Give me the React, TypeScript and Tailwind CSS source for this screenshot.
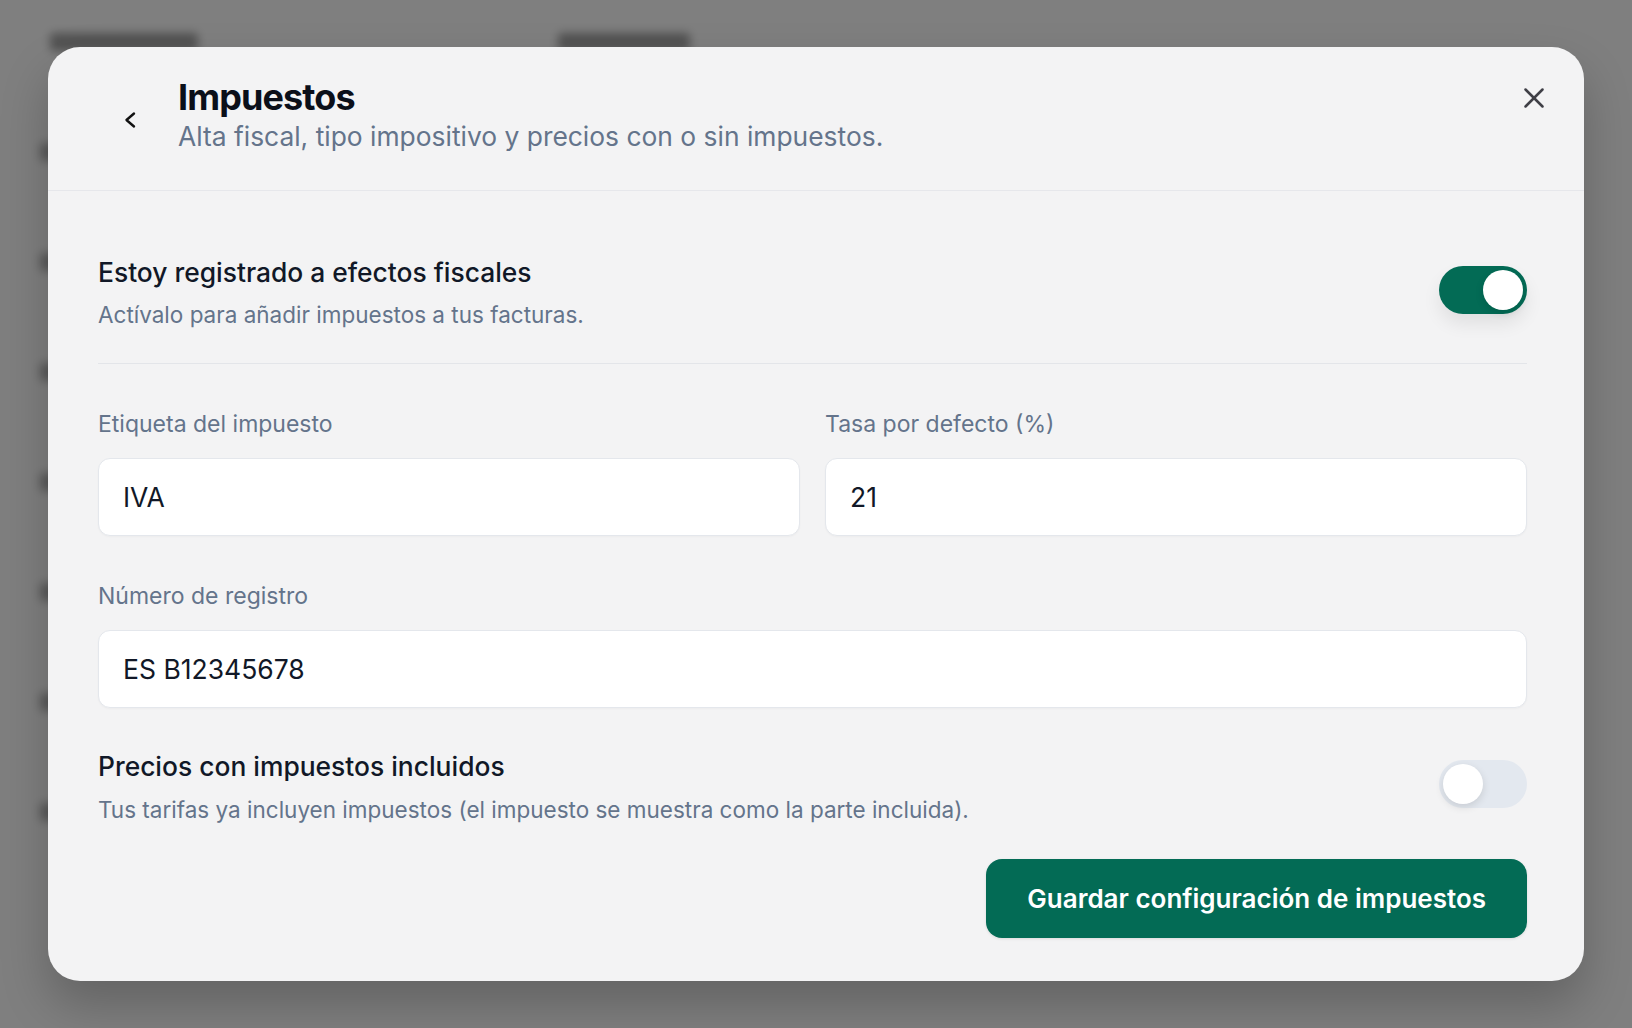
import React from 'react';
import { X } from 'lucide-react';

const Toggle: React.FC<{ on: boolean; onChange: (v: boolean) => void }> = ({ on, onChange }) => (
  <button
    type="button"
    role="switch"
    aria-checked={on}
    onClick={() => onChange(!on)}
    className={`mt-[11px] flex h-[48px] w-[88px] shrink-0 items-center rounded-full p-1 transition-colors ${
      on ? 'justify-end bg-[#036b55] shadow-[0_10px_18px_rgba(0,0,0,0.08)]' : 'justify-start bg-[#e3e8ef]'
    }`}
  >
    <span className="h-[40px] w-[40px] rounded-full bg-white shadow-[0_3px_8px_rgba(0,0,0,0.12)]" />
  </button>
);

const Field: React.FC<{ label: string; value: string; onChange: (v: string) => void }> = ({ label, value, onChange }) => (
  <label className="flex flex-col">
    <span className="mb-[20px] text-[23px] leading-[28px] text-[#64748b]">{label}</span>
    <input
      value={value}
      onChange={e => onChange(e.target.value)}
      className="h-[78px] rounded-[12px] border-[1.5px] border-[#e4e7ec] bg-white px-[24px] text-[26.5px] text-[#111827] shadow-[0_1px_2px_rgba(0,0,0,0.03)] outline-none"
    />
  </label>
);

// blurred page behind the dialog
const Backdrop: React.FC = () => (
  <div className="flex h-full flex-col bg-white blur-[5px]">
    <div className="flex items-center gap-[360px] px-[50px] pt-[33px]">
      <div className="h-[18px] w-[148px] rounded bg-[#a4a4a4]" />
      <div className="h-[18px] w-[132px] rounded bg-[#a4a4a4]" />
    </div>
    <div className="mt-[92px] flex flex-col gap-[92px] pl-[40px]">
      {[0, 1, 2, 3, 4, 5, 6].map(i => (
        <div key={i} className="h-[18px] w-[120px] rounded bg-[#b4b4b4]" />
      ))}
    </div>
  </div>
);

export default function App() {
  const [registered, setRegistered] = React.useState(true);
  const [inclusive, setInclusive] = React.useState(false);
  const [label, setLabel] = React.useState('IVA');
  const [rate, setRate] = React.useState('21');
  const [number, setNumber] = React.useState('ES B12345678');

  return (
    <div className="relative h-[1028px] w-full overflow-hidden font-['Inter',sans-serif]">
      <Backdrop />
      <div className="absolute inset-0 bg-black/50" />

      <div className="absolute inset-0 flex items-center justify-center">
        <div className="w-[1536px] rounded-[32px] bg-[#f3f3f4] shadow-[0_24px_48px_rgba(0,0,0,0.22)]">
          {/* header */}
          <div className="flex items-start border-b-[1.5px] border-[#e6e7eb] pb-[37px] pl-[64px] pr-[33px] pt-[29px]">
            <button type="button" className="mt-[26px] flex h-9 w-9 items-center justify-center text-[#111]">
              <svg width="24" height="24" viewBox="0 0 24 24" fill="none" stroke="currentColor" strokeWidth="2.4" strokeLinecap="round" strokeLinejoin="round">
                <path d="M16 5.5 8.5 12 16 18.5" />
              </svg>
            </button>
            <div className="ml-[30px]">
              <h2 className="text-[36px] font-bold leading-[43px] tracking-tight text-[#0b0f19]">Impuestos</h2>
              <p className="mt-[1px] text-[26.4px] leading-[33px] text-[#64748b]">
                Alta fiscal, tipo impositivo y precios con o sin impuestos.
              </p>
            </div>
            <button type="button" className="ml-auto mt-[5px] flex h-[34px] w-[34px] items-center justify-center text-[#3f3f46]">
              <X size={34} strokeWidth={1.75} />
            </button>
          </div>

          {/* body */}
          <div className="pb-[43px] pl-[50px] pr-[57px] pt-[64px]">
            <div className="flex items-start justify-between border-b-[1.5px] border-[#e3e5e9] pb-[33px]">
              <div>
                <h3 className="text-[26.4px] font-medium leading-[34px] text-[#111827]">Estoy registrado a efectos fiscales</h3>
                <p className="mt-[11px] text-[22.5px] leading-[30px] text-[#64748b]">Actívalo para añadir impuestos a tus facturas.</p>
              </div>
              <Toggle on={registered} onChange={setRegistered} />
            </div>

            <div className="mt-[46px] grid grid-cols-2 gap-[25px]">
              <Field label="Etiqueta del impuesto" value={label} onChange={setLabel} />
              <Field label="Tasa por defecto (%)" value={rate} onChange={setRate} />
            </div>

            <div className="mt-[46px]">
              <Field label="Número de registro" value={number} onChange={setNumber} />
            </div>

            <div className="mt-[41px] flex items-start justify-between">
              <div>
                <h3 className="text-[26.4px] font-medium leading-[34px] text-[#111827]">Precios con impuestos incluidos</h3>
                <p className="mt-[12px] text-[22.5px] leading-[30px] text-[#64748b]">
                  Tus tarifas ya incluyen impuestos (el impuesto se muestra como la parte incluida).
                </p>
              </div>
              <Toggle on={inclusive} onChange={setInclusive} />
            </div>

            <div className="mt-[34px] flex justify-end">
              <button
                type="button"
                className="h-[79px] rounded-[16px] bg-[#036b55] px-[41px] text-[26px] font-semibold text-white shadow-[0_1px_3px_rgba(0,0,0,0.1)]"
              >
                Guardar configuración de impuestos
              </button>
            </div>
          </div>
        </div>
      </div>
    </div>
  );
}
